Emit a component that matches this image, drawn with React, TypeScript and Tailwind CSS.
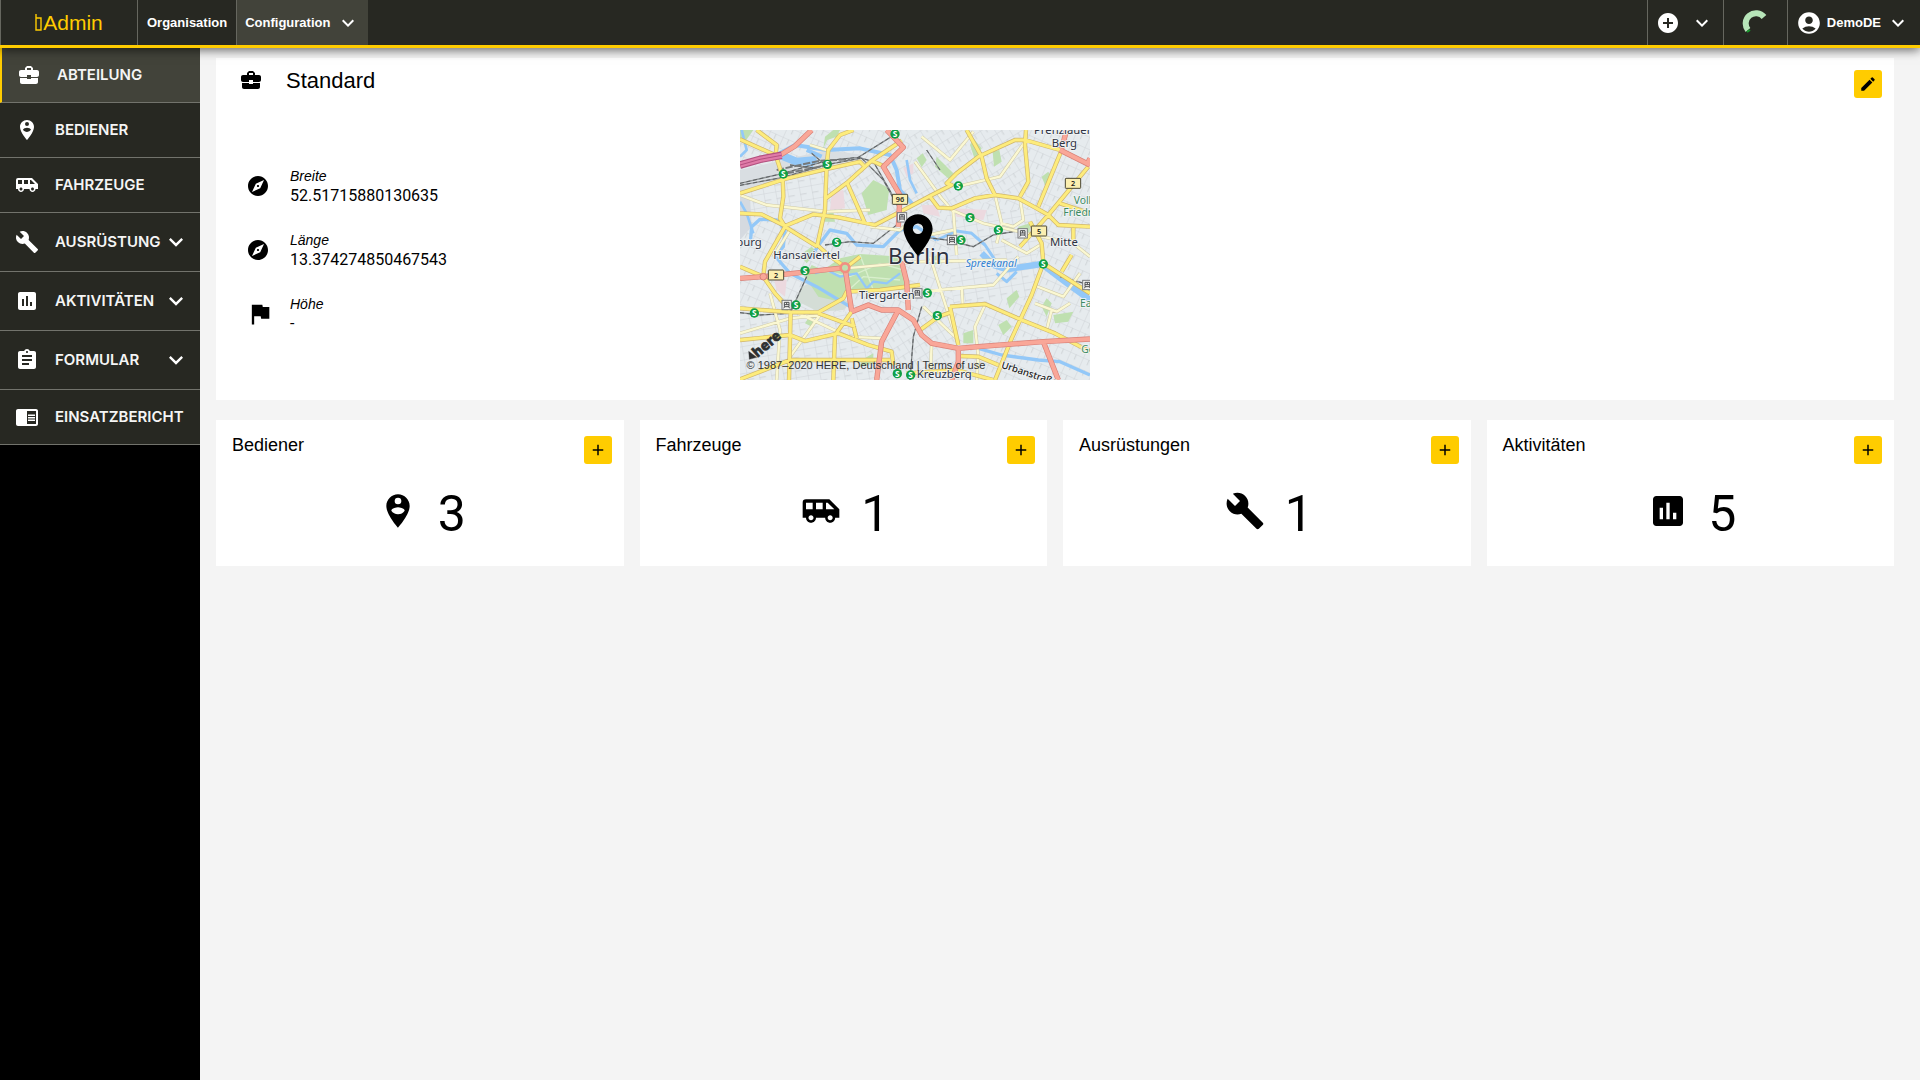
import React from 'react';
import {
  MdAccountCircle,
  MdAdd,
  MdAddCircle,
  MdAirportShuttle,
  MdAssessment,
  MdAssignment,
  MdBuild,
  MdBusinessCenter,
  MdChromeReaderMode,
  MdEdit,
  MdExpandMore,
  MdExplore,
  MdFlag,
  MdPersonPinCircle,
  MdPlace,
} from 'react-icons/md';

const navItems = [
  { label: 'Abteilung', icon: MdBusinessCenter, active: true },
  { label: 'Bediener', icon: MdPersonPinCircle },
  { label: 'Fahrzeuge', icon: MdAirportShuttle },
  { label: 'Ausrüstung', icon: MdBuild, expandable: true },
  { label: 'Aktivitäten', icon: MdAssessment, expandable: true },
  { label: 'Formular', icon: MdAssignment, expandable: true },
  { label: 'Einsatzbericht', icon: MdChromeReaderMode },
];

const fields = [
  { label: 'Breite', value: '52.51715880130635', icon: MdExplore, size: 24 },
  { label: 'Länge', value: '13.374274850467543', icon: MdExplore, size: 24 },
  { label: 'Höhe', value: '-', icon: MdFlag, size: 28 },
];

const counters = [
  { label: 'Bediener', count: 3, icon: MdPersonPinCircle },
  { label: 'Fahrzeuge', count: 1, icon: MdAirportShuttle },
  { label: 'Ausrüstungen', count: 1, icon: MdBuild },
  { label: 'Aktivitäten', count: 5, icon: MdAssessment },
];

// street blocks, each with its own grid direction
const blocks = [
  { points: '0,0 1050,0 1050,750 0,750', pattern: 'url(#gridA)' },
  { points: '0,190 255,118 255,250 0,250', pattern: 'url(#gridB)' },
  { points: '265,110 500,90 600,220 405,285 255,240', pattern: 'url(#gridC)' },
  { points: '500,0 860,0 860,200 620,235 540,200', pattern: 'url(#gridC)' },
  { points: '860,30 1050,100 1050,290 860,240', pattern: 'url(#gridA)' },
  { points: '620,240 900,240 880,500 640,520', pattern: 'url(#gridB)' },
  { points: '0,545 335,545 410,750 0,750', pattern: 'url(#gridB)' },
  { points: '335,545 640,545 650,750 410,750', pattern: 'url(#gridC)' },
];

const parks = [
  '195,440 215,405 250,420 300,385 360,372 485,380 505,478 325,488 300,515 235,500',
  '365,190 400,150 448,175 440,240 385,255',
  '250,55 262,30 290,20 300,0 280,0 255,20',
  '0,0 40,0 15,35 0,30',
  '530,85 548,70 560,90 545,112',
  '690,45 700,25 725,55 705,90',
  '758,65 778,60 785,95 762,110',
  '905,140 925,125 935,145 915,165',
  '590,80 640,130 630,150 585,110',
  '800,505 830,480 838,500 808,535',
  '775,585 800,570 815,590 790,615',
  '905,530 920,505 935,520 920,560',
  '940,555 1000,545 985,575 945,580',
  '670,610 700,600 700,640 670,640',
  '250,255 280,245 285,275 255,275',
  '180,375 215,350 230,365 200,400',
  '205,565 225,570 215,590 195,580',
  '365,690 400,670 400,700 360,710',
  '570,380 600,375 605,400 575,405',
  '835,290 870,280 868,325 835,325',
];

const water = [
  { d: 'M100 80 165 45 260 60 360 55 450 75 470 120 480 180 520 225', width: 12 },
  { d: 'M120 75 170 95 230 90', width: 24 },
  { d: 'M150 92 220 105M200 60 245 80', width: 12 },
  { d: 'M5 0 20 60 0 80M0 215 20 250 40 310', width: 8 },
  { d: 'M30 350 35 290 60 268 110 270 135 300 130 350 105 378 150 430 230 470 330 530', width: 10 },
  { d: 'M210 385 240 340 270 300 320 310 350 345 430 350 480 300 530 290 590 330', width: 10 },
  { d: 'M225 430 260 420 300 440 350 430 380 475 400 455 440 460 480 430', width: 7 },
  { d: 'M590 330 650 303 695 310 735 345 765 390', width: 9 },
  { d: 'M725 370 760 405 800 418 905 402 975 455 1050 510', width: 19 },
  { d: 'M770 430 800 455 830 425', width: 9 },
  { d: 'M715 655 785 675 895 690 960 695 1050 735', width: 10 },
  { d: 'M500 90 510 150 530 190', width: 8 },
];

const lightRoads =
  'M0 195 80 225 260 245 390 240M210 45 265 62M525 95 605 205 640 245 650 375M545 20 630 90 700 5M650 170 780 140 855 35M635 240 730 280 860 310M765 195 785 280 770 340M840 205 850 270 820 290 785 280M640 300 540 320M540 485 760 465 835 380M570 380 655 645M735 525 705 590 715 680 710 750M665 470 668 525M880 465 970 500 1020 430M885 520 950 545 990 520M935 540 920 600M315 415 540 395 800 390M175 550 325 620 430 625M0 610 150 565 240 555M240 555 150 680M90 490 120 600 110 750M390 290 480 300 525 260M100 380 150 300M550 530 650 625M575 640 570 750M785 330 860 370 900 345M860 310 1000 340 1050 380';

const mainRoads =
  'M50 0 110 45 107 75 128 140 130 200 120 265 135 290M0 28 105 75M0 190 135 147 255 118 360 95 372 108M340 0 300 15 265 60 260 105 255 240 232 345 265 375 315 410M255 207 325 155 395 92 485 32M322 160 375 280M395 92 430 108M0 250 65 253 135 288 220 253 295 262 405 285 525 222 570 198 635 165 620 160 650 130 715 80 825 30 855 30 960 60M135 290 232 350M570 200 595 233 635 235 705 205 765 195 835 205 890 235 925 255 955 285 1050 290M680 0 725 80 740 145 765 195M858 0 855 45 865 155 840 200M965 60 895 230M1045 110 925 255 840 350M870 275 905 340 910 400 875 495 815 625 765 750M910 400 1050 490M630 530 735 522 845 570 945 610 1050 665M540 600 595 560 630 548M630 530 655 645M655 678 715 680 775 705M995 375 965 425M1000 290 1000 340M960 220 1050 250M0 410 70 440 75 395 135 290M70 440 105 490 150 540M0 535 155 547 235 547 310 505 320 485 420 480 540 465M152 545 147 750M0 630 150 615 195 633 295 610 385 645 455 665 460 705M335 545 285 615 280 750M0 748 150 690 300 690 450 690M235 550 345 590M335 565 350 625M315 415 360 380M500 730 650 720 760 750';

const redRoads =
  'M110 82 165 48 215 0M440 0 490 52 430 110 480 195 475 290M485 395 500 455 505 540M0 445 70 440 315 413 335 543M335 545 385 525 425 540 475 540 520 570 545 615 575 640 655 655 715 650 910 635 1050 627M475 540 425 635 410 750M910 635 955 750M655 655 655 695 635 750M960 60 1050 105M980 0 965 55M1050 85 1040 105';

const rails =
  'M0 160 130 130 260 92 355 82 470 10M0 166 130 142 255 105 360 85M355 82 400 95 460 200M365 85 430 150 490 260M255 345 330 335 400 340 470 285M560 60 600 120M540 320 620 330 700 350 760 315 850 300M0 548 60 555 150 550 200 440M545 530 520 620 510 750M960 440 1050 465M150 105 230 115M215 70 250 100';

const stations = [
  [465, 12], [262, 103], [130, 132], [290, 337], [655, 168], [690, 263], [775, 300], [663, 330],
  [910, 402], [195, 422], [168, 525], [43, 549], [562, 489], [592, 557], [472, 731], [512, 735],
];

const trains = [[486, 262], [636, 330], [848, 310], [140, 525], [532, 490], [1042, 465]];

const shields = [
  { x: 480, y: 208, text: '96' },
  { x: 999, y: 160, text: '2' },
  { x: 897, y: 303, text: '5' },
  { x: 108, y: 435, text: '2' },
];

function CityMap() {
  return (
    <svg viewBox="0 0 1050 750" className="block w-full h-full font-['Noto_Sans',sans-serif]" fill="none">
      <defs>
        <pattern id="gridA" width="42" height="34" patternUnits="userSpaceOnUse" patternTransform="rotate(24)">
          <path d="M0 0H42M0 0V34M20 0V18" stroke="#cfd4d7" strokeWidth="3" />
        </pattern>
        <pattern id="gridB" width="36" height="40" patternUnits="userSpaceOnUse" patternTransform="rotate(-10)">
          <path d="M0 0H36M0 0V40M0 22H20" stroke="#cfd4d7" strokeWidth="3" />
        </pattern>
        <pattern id="gridC" width="38" height="32" patternUnits="userSpaceOnUse" patternTransform="rotate(-32)">
          <path d="M0 0H38M0 0V32M18 0V16" stroke="#cfd4d7" strokeWidth="3" />
        </pattern>
      </defs>
      <rect width="1050" height="750" fill="#e6ebee" />
      {blocks.map((block, i) => (
        <g key={i}>
          <polygon points={block.points} fill="#e6ebee" />
          <polygon points={block.points} fill={block.pattern} />
        </g>
      ))}
      <path d="M0 120 130 90 260 60 370 75 260 110 0 185Z" fill="#d9dee2" />
      <path d="M0 190 30 200 35 290 0 330Z" fill="#d5dae0" />
      <path d="M275 190 310 180 315 235 270 240ZM490 115 520 100 520 130 500 140ZM640 235 740 240 730 270 650 260ZM545 225 590 225 600 260 550 250ZM100 440 140 450 135 500 110 480Z" fill="#ecd9df" />
      <path d="M185 470 235 450 330 520 310 540 235 545 165 510Z" fill="#d4ddd6" />
      {parks.map((points) => (
        <polygon key={points} points={points} fill="#bfe0b0" />
      ))}
      <path d="M240 420 330 440 420 400 490 420M320 485 370 440 480 450M360 375 400 480" stroke="#d9efcd" strokeWidth="4" />
      <g stroke="#93c8f8" strokeLinejoin="round">
        {water.map((w) => (
          <path key={w.d} d={w.d} strokeWidth={w.width} />
        ))}
      </g>
      <path d={rails} stroke="#8e9294" strokeWidth="4" />
      <path d={rails} stroke="#5c6062" strokeWidth="3" strokeDasharray="12 8" />
      <path d="M110 120 240 92 330 88M140 130 250 108" stroke="#75797b" strokeWidth="6" strokeDasharray="22 5" />
      <g strokeLinejoin="round">
        <path d={lightRoads} stroke="#cfcaa8" strokeWidth="10" />
        <path d={lightRoads} stroke="#fbf8d2" strokeWidth="7" />
        <path d={mainRoads} stroke="#d0b66c" strokeWidth="13" />
        <path d={mainRoads} stroke="#fdec7c" strokeWidth="9" />
        <path d={redRoads} stroke="#d98078" strokeWidth="16" />
        <path d={redRoads} stroke="#f9a798" strokeWidth="12" />
        <path d="M0 105 60 88 125 76" stroke="#b3507f" strokeWidth="23" />
        <path d="M0 105 60 88 125 76" stroke="#e07ba8" strokeWidth="16" />
        <path d="M0 105 60 88 125 76" stroke="#b3507f" strokeWidth="3" />
      </g>
      <circle cx="70" cy="440" r="10" fill="#f9a798" stroke="#d98078" strokeWidth="3" />
      <circle cx="315" cy="413" r="13" fill="#bfe0b0" stroke="#f08f82" strokeWidth="8" />

      {trains.map(([x, y]) => (
        <g key={x}>
          <rect x={x - 14} y={y - 14} width="28" height="28" fill="#f4f4f4" stroke="#77797c" strokeWidth="3" />
          <path d={`M${x - 7} ${y - 8}h14v13h-14zM${x - 7} ${y - 1}h14M${x} ${y - 8}v7M${x - 6} ${y + 5}l-3 5M${x + 6} ${y + 5}l3 5`} stroke="#4b4d50" strokeWidth="3" />
        </g>
      ))}
      {stations.map(([x, y]) => (
        <g key={x}>
          <circle cx={x} cy={y} r="14" fill="#0f9f45" />
          <text x={x} y={y + 9} textAnchor="middle" fontSize="25" fontWeight="700" fill="#fff">S</text>
        </g>
      ))}
      {shields.map((s) => (
        <g key={s.x}>
          <rect x={s.x - 23} y={s.y - 15} width="46" height="30" rx="2" fill="#fbefb0" stroke="#4a4632" strokeWidth="3" />
          <text x={s.x} y={s.y + 8} textAnchor="middle" fontSize="22" fontWeight="600" fill="#222">{s.text}</text>
        </g>
      ))}

      <g fill="#2e3242" stroke="#f1f4f5" strokeWidth="5" paintOrder="stroke" fontSize="34">
        <text x="65" y="347" textAnchor="end">burg</text>
        <text x="100" y="387">Hansaviertel</text>
        <text x="357" y="507">Tiergarten</text>
        <text x="930" y="347">Mitte</text>
        <text x="882" y="13">Prenzlauer</text>
        <text x="935" y="50">Berg</text>
        <text x="530" y="745">Kreuzberg</text>
        <text x="444" y="402" fontSize="67">Berlin</text>
        <text x="677" y="411" fontSize="31" fontStyle="italic" fill="#2f7fd0">Spreekanal</text>
        <g fill="#3c8a63" fontSize="31">
          <text x="1001" y="223">Volkspark</text>
          <text x="970" y="258">Friedrichshain</text>
          <text x="1020" y="532">East</text>
          <text x="1024" y="669">Görlitzer</text>
        </g>
        <text x="782" y="713" fontSize="29" fontWeight="500" transform="rotate(18 782 713)" fill="#222">Urbanstraße</text>
      </g>
      <g fill="#2d2f31" stroke="#2d2f31">
        <text fontSize="42" fontWeight="800" strokeWidth="2" transform="translate(52 684) rotate(-40)">here</text>
        <path d="M26 664 50 682 28 688Z" />
      </g>
    </svg>
  );
}

function YellowButton({ label, children }: { label: string; children: React.ReactNode }) {
  return (
    <button
      type="button"
      aria-label={label}
      className="w-7 h-7 shrink-0 rounded-[3px] bg-[#ffcc00] flex items-center justify-center"
    >
      {children}
    </button>
  );
}

function Header() {
  return (
    <header className="relative z-10 h-12 flex bg-[#272822] text-white text-[13px] font-bold border-b-3 border-[#ffcc00] shadow-[0_2px_10px_rgba(0,0,0,0.6)]">
      <a
        href="#"
        className="w-[138px] flex items-center justify-center gap-px border-x border-[#66675f] text-[21px] font-normal text-[#ffcc00]"
      >
        <svg width="7" height="17" viewBox="0 0 7 17" fill="none" stroke="currentColor" aria-hidden="true">
          <path d="M1 0V16H6V4H1" strokeWidth="1.4" />
        </svg>
        Admin
      </a>
      <nav className="flex">
        <a href="#" className="flex items-center px-[9px] border-r border-[#66675f]">
          Organisation
        </a>
        <button type="button" className="flex items-center gap-[6px] pl-2 pr-2 bg-[#42433a]">
          Configuration
          <MdExpandMore size={24} />
        </button>
      </nav>
      <div className="flex ml-auto">
        <button
          type="button"
          aria-label="Hinzufügen"
          className="w-[76px] flex items-center justify-center gap-[10px] border-l border-[#66675f]"
        >
          <MdAddCircle size={24} />
          <MdExpandMore size={24} />
        </button>
        <div className="w-16 flex items-center justify-center border-l border-[#66675f]">
          <svg width="26" height="26" viewBox="0 0 26 26" fill="none" aria-label="Laden">
            <path d="M22 7A10 10 0 0 0 6 20" stroke="#b7e5b9" strokeWidth="6" />
            <path d="M5 22 8 20" stroke="#169b2d" strokeWidth="2" />
          </svg>
        </div>
        <button type="button" className="flex items-center gap-[5px] pl-2 pr-[10px] border-l border-[#66675f]">
          <MdAccountCircle size={26} />
          DemoDE
          <MdExpandMore size={24} />
        </button>
      </div>
    </header>
  );
}

function Sidebar() {
  return (
    <aside className="w-[200px] shrink-0 bg-black">
      <nav className="flex flex-col">
        {navItems.map(({ label, icon: Icon, active, expandable }) => (
          <a
            key={label}
            href="#"
            className={`flex items-center pl-[15px] pr-[10px] border-b border-[#72736c] font-[Inter,sans-serif] text-[15px] font-semibold uppercase text-[#f5f5f5] ${
              active ? 'bg-[#42433a] border-l-2 border-l-[#ffcc00]' : 'bg-[#272822]'
            } ${expandable ? 'h-[59px]' : 'h-[55px]'}`}
          >
            <Icon size={24} className="shrink-0 mr-4 text-white" />
            {label}
            {expandable && <MdExpandMore size={28} className="shrink-0 ml-auto text-white" />}
          </a>
        ))}
      </nav>
    </aside>
  );
}

function DepartmentCard() {
  return (
    <section className="bg-white h-[342px] pt-3 pr-3 pl-[23px]">
      <div className="flex justify-between">
        <h1 className="h-5 flex items-center gap-[23px] text-[22px]">
          <MdBusinessCenter size={24} />
          Standard
        </h1>
        <YellowButton label="Bearbeiten">
          <MdEdit size={18} />
        </YellowButton>
      </div>
      <div className="grid grid-cols-[12fr_350px_19fr] mt-8">
        <dl className="flex flex-col gap-6 pt-9 pl-[7px]">
          {fields.map(({ label, value, icon: Icon, size }) => (
            <div key={label} className="flex items-center h-10">
              <span className="w-11 shrink-0">
                <Icon size={size} />
              </span>
              <div>
                <dt className="text-sm italic leading-5">{label}</dt>
                <dd className="font-[Roboto,sans-serif] text-base leading-5">{value}</dd>
              </div>
            </div>
          ))}
        </dl>
        <div className="relative h-[250px] overflow-hidden">
          <CityMap />
          <MdPlace size={50} className="absolute left-[153px] top-[80px]" />
          <p className="absolute left-[7px] bottom-[7px] text-[11px] leading-4 text-[#333] whitespace-nowrap">
            © 1987–2020 HERE, Deutschland | <a href="#">Terms of use</a>
          </p>
        </div>
      </div>
    </section>
  );
}

export default function App() {
  return (
    <div className="min-h-screen flex flex-col bg-[#f4f4f4] text-black font-['Liberation_Sans',Arial,sans-serif]">
      <Header />
      <div className="flex flex-1">
        <Sidebar />
        <main className="flex-1 min-w-0 pt-[10px] pl-4 pr-[26px]">
          <DepartmentCard />
          <div className="grid grid-cols-4 gap-4 mt-5">
            {counters.map(({ label, count, icon: Icon }) => (
              <section key={label} className="bg-white h-[146px] pt-4 pr-3 pl-4">
                <div className="flex justify-between">
                  <h2 className="text-lg leading-[18px]">{label}</h2>
                  <YellowButton label={`${label} hinzufügen`}>
                    <MdAdd size={18} />
                  </YellowButton>
                </div>
                <div className="flex items-start justify-center gap-5 mt-[27px]">
                  <Icon size={40} />
                  <span className="font-[Roboto,sans-serif] text-[50px] leading-[46px]">{count}</span>
                </div>
              </section>
            ))}
          </div>
        </main>
      </div>
    </div>
  );
}
